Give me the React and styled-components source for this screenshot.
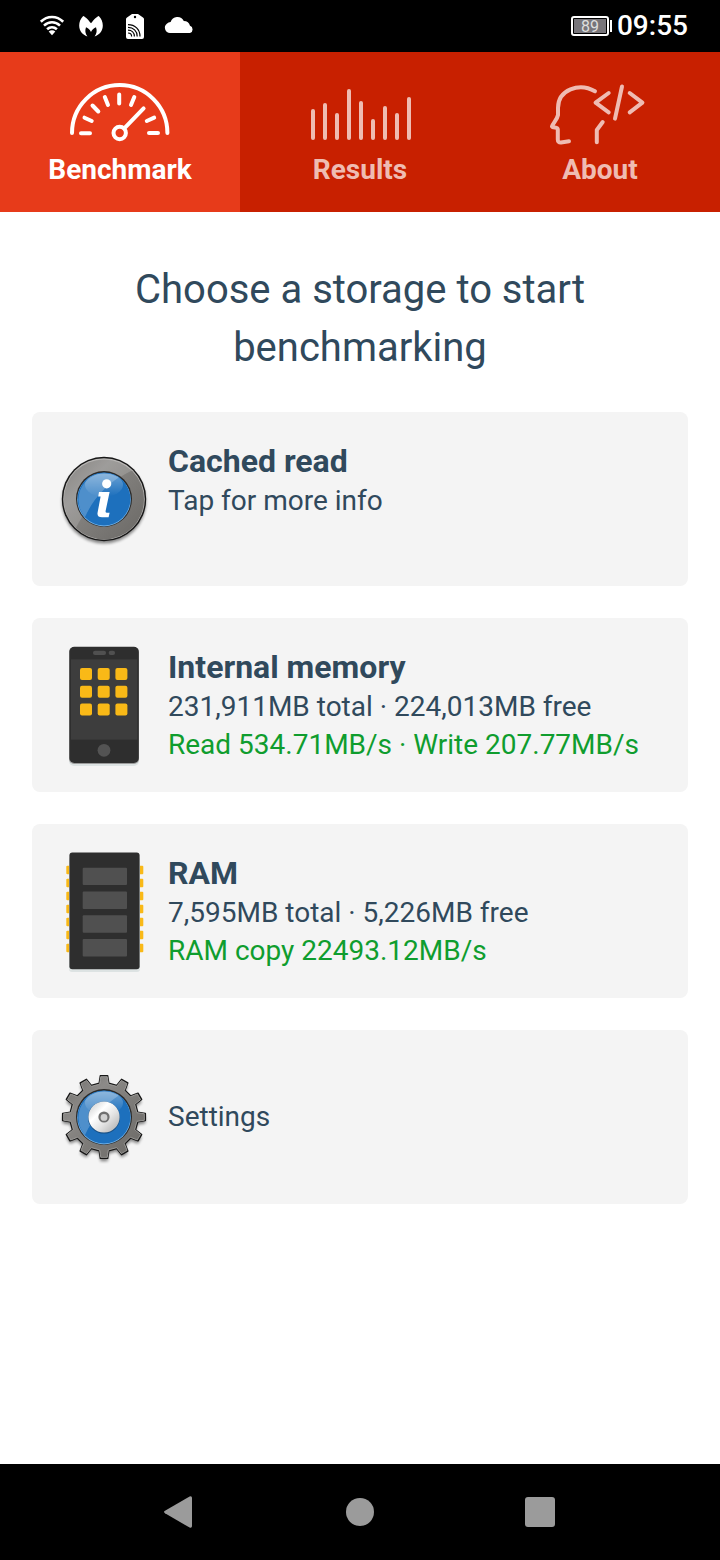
import React, { useState } from 'react';
import styled, { createGlobalStyle } from 'styled-components';

const GlobalStyle = createGlobalStyle`
* {
  box-sizing: border-box;
}
body {
  margin: 0;
  background-color: #fff;
  font-family: Roboto, "Liberation Sans", sans-serif;
  color: #30495c;
}
button {
  margin: 0;
  border: none;
  font: inherit;
  color: inherit;
  cursor: pointer;
}
svg {
  display: block;
  flex: none;
  overflow: visible;
}
`;

const Screen = styled.div`
min-height: 100vh;
display: flex;
flex-direction: column;
`;

const StatusBar = styled.header`
height: 52px;
padding: 0 32px 0 38px;
display: flex;
align-items: center;
justify-content: space-between;
background-color: #000;
color: #fff;
`;

const StatusIcons = styled.div`
display: flex;
gap: 14px;
`;

const StatusInfo = styled.div`
display: flex;
align-items: center;
`;

const Battery = styled.div`
width: 38px;
height: 20px;
padding: 1px;
border: 2px solid #fff;
border-radius: 3px;
`;

const BatteryLevel = styled.div`
height: 14px;
background-color: #77757a;
color: #dedede;
font-size: 16px;
line-height: 15px;
text-align: center;
`;

const BatteryTip = styled.div`
width: 2px;
height: 12px;
margin: 0 5px 0 1px;
background-color: #fff;
`;

const Clock = styled.time`
font-size: 28px;
font-weight: 500;
line-height: 32px;
`;

const Tabs = styled.nav`
display: grid;
grid-template-columns: repeat(3, 1fr);
background-color: #c82000;
`;

const Tab = styled.button`
height: 160px;
padding: 27px 0 0;
display: flex;
flex-direction: column;
align-items: center;
background-color: ${({ $active }) => ($active ? '#e73b1a' : '#c82000')};
color: ${({ $active }) => ($active ? '#fff' : '#efbcb2')};
`;

const TabLabel = styled.span`
font-size: 28px;
font-weight: 700;
line-height: 38px;
`;

const Main = styled.main`
flex: 1;
padding: 49px 32px 32px;
`;

const Heading = styled.h1`
margin: 0 0 35px;
font-size: 40px;
font-weight: 400;
line-height: 58px;
text-align: center;
`;

const CardList = styled.div`
display: flex;
flex-direction: column;
gap: 32px;
`;

const Card = styled.button`
width: 100%;
padding: 23px 24px;
display: flex;
align-items: center;
gap: 16px;
border-radius: 8px;
background-color: #f4f4f4;
text-align: left;
`;

const CardText = styled.span`
min-height: 118px;
display: flex;
flex-direction: column;
justify-content: ${({ $centered }) => ($centered ? 'center' : 'flex-start')};
`;

const CardTitle = styled.span`
font-size: 32px;
font-weight: 700;
line-height: 42px;
`;

const CardLine = styled.span`
font-size: 28px;
line-height: 38px;
color: ${({ $speed }) => ($speed ? '#0f9d2e' : '#30495c')};
`;

const SystemBar = styled.footer`
height: 96px;
padding: 0 12.5%;
display: grid;
grid-template-columns: repeat(3, 1fr);
background-color: #000;
`;

const SystemButton = styled.button`
padding: 0;
display: flex;
align-items: center;
justify-content: center;
background-color: transparent;
`;

function WifiIcon() {
  return (
    <svg width="28" height="28" viewBox="0 0 28 28" fill="none" stroke="#fff" strokeWidth="2.6">
      <path d="M2.8 9.8C9.3 3.4 18.7 3.4 25.2 9.8" />
      <path d="M6 13.6C10.7 9.2 17.3 9.2 22 13.6" />
      <path d="M9.1 17.3C12 14.6 16 14.6 18.9 17.3" />
      <path d="M10.7 19.6C12.6 17.8 15.4 17.8 17.3 19.6L14 23.2Z" fill="#fff" stroke="none" />
    </svg>
  );
}

function WingsIcon() {
  return (
    <svg width="28" height="28" viewBox="0 0 28 28" fill="#fff">
      <path d="M3.2 4C4.8 4.3 8 7.4 11 11.3C14 7.4 17.2 4.3 18.8 4C21.6 6.8 22.8 10 22.8 13.6C22.8 19 19.4 23.2 14.6 24.4C16.8 21.8 17.2 18.4 16 15.2C14 15.8 12.2 17.6 11 20C9.8 17.6 8 15.8 6 15.2C4.8 18.4 5.2 21.8 7.4 24.4C2.6 23.2 -0.8 19 -0.8 13.6C-0.8 10 0.4 6.8 3.2 4Z" />
    </svg>
  );
}

function TagIcon() {
  return (
    <svg width="28" height="28" viewBox="0 0 28 28" fill="none">
      <path d="M5 5.5L10 2H16L21 5.5Q22 6 22 7V25Q22 27 20 27H6Q4 27 4 25V7Q4 6 5 5.5Z" fill="#fff" />
      <circle cx="13" cy="5" r="1.2" fill="#000" />
      <path d="M6 12.6C13 12.6 18 17.5 18 24.4M6 15.4C11.4 15.4 15.2 19 15.2 24.4M6 18.2C9.8 18.2 12.4 20.6 12.4 24.4M6 21C8.2 21 9.6 22.2 9.6 24.4" stroke="#000" strokeWidth="1.2" />
    </svg>
  );
}

function CloudIcon() {
  return (
    <svg width="30" height="28" viewBox="0 0 30 28" fill="#fff">
      <path d="M6 21A5.2 5.2 0 0 1 2.8 11.8Q4.4 10 6.6 10A7.2 7.2 0 0 1 19.8 8.9A6.4 6.4 0 0 1 26 13.8A3.8 3.8 0 0 1 26 21Z" />
    </svg>
  );
}

function TabIcon({ children }) {
  return (
    <svg width="104" height="72" viewBox="0 0 104 72" fill="none" stroke="currentColor" strokeWidth="4" strokeLinecap="round" strokeLinejoin="round">
      {children}
    </svg>
  );
}

function GaugeIcon() {
  return (
    <TabIcon>
      <path d="M4 54A47.7 48 0 0 1 99.4 54" />
      <path d="M13 54.3H22M81 54H90M16.5 38.7L23.7 42M24.5 26.5L30.3 32.5M36.8 18L40 26M51.2 15.5V24.5M66.3 18L63 26M78.8 42L86.2 38.7" />
      <path d="M75.6 29.4L57 48.6" />
      <circle cx="51.7" cy="54" r="6.2" />
    </TabIcon>
  );
}

const barTops = [32, 26, 36, 12, 24, 42, 29, 36, 20];

function BarsIcon() {
  return (
    <TabIcon>
      {barTops.map((top, i) => (
        <path key={i} d={`M${5 + i * 12} ${top}V59`} />
      ))}
    </TabIcon>
  );
}

function HeadCodeIcon() {
  return (
    <TabIcon>
      <path d="M47 12.3C31 3 10 11 10 29V36C9 41 5.5 43.5 4 47.5C5 49.4 9.8 47.6 9.8 50.5V60.5Q9.8 63.7 13 63.5L21 62.3" />
      <path d="M54.7 43L48.8 51V63.3" />
      <path d="M60.7 14L47.6 23.7L60.7 33.3M74 7.5L67 39.6M81.7 14L94.4 23.7L81.7 33.3" />
    </TabIcon>
  );
}

function CardIcon({ children }) {
  return (
    <svg width="96" height="128" viewBox="0 0 96 128" aria-hidden="true">
      <defs>
        <linearGradient id="steel" x1="0" y1="0" x2="1" y2="1">
          <stop offset="0" stopColor="#6f6d6a" />
          <stop offset="0.3" stopColor="#8c8a88" />
          <stop offset="0.5" stopColor="#807e7b" />
          <stop offset="1" stopColor="#6a6865" />
        </linearGradient>
        <linearGradient id="gloss" x1="0" y1="0" x2="0" y2="1">
          <stop offset="0" stopColor="#fff" stopOpacity="0.35" />
          <stop offset="1" stopColor="#fff" stopOpacity="0" />
        </linearGradient>
        <linearGradient id="hub" x1="0" y1="0" x2="1" y2="1">
          <stop offset="0" stopColor="#c4c4c4" />
          <stop offset="0.35" stopColor="#fff" />
          <stop offset="0.6" stopColor="#e4e4e4" />
          <stop offset="1" stopColor="#a8a8a8" />
        </linearGradient>
        <filter id="soft" x="-20%" y="-20%" width="140%" height="140%">
          <feGaussianBlur stdDeviation="1.5" />
        </filter>
      </defs>
      {children}
    </svg>
  );
}

function BlueLens() {
  return (
    <>
      <circle cx="48" cy="64" r="28" fill="#2a2928" />
      <circle cx="48" cy="64.6" r="26.8" fill="#78b8ee" />
      <circle cx="48" cy="64" r="26.4" fill="#1d70bd" />
      <path d="M29 82A26.4 26.4 0 0 1 63 42.3C50 51 37 64 29 82Z" fill="#fff" opacity="0.22" />
      <ellipse cx="48" cy="50" rx="19" ry="11.5" fill="url(#gloss)" />
    </>
  );
}

function InfoIcon() {
  return (
    <CardIcon>
      <circle cx="48" cy="66.5" r="42" fill="#000" opacity="0.45" filter="url(#soft)" />
      <circle cx="48" cy="64" r="42.2" fill="#171717" />
      <circle cx="48" cy="64" r="40.8" fill="#b7b5b3" />
      <circle cx="48" cy="64.4" r="40" fill="url(#steel)" />
      <path d="M20 92.8A40 40 0 0 1 76 35.6C56 45 34 65 20 92.8Z" fill="#fff" opacity="0.16" />
      <BlueLens />
      <circle cx="50.7" cy="48.8" r="4.6" fill="#fff" />
      <path d="M43 57H53.6L49.6 76Q49.3 77.8 51 77.8H53.6L52.6 82.3H46Q40.7 82.3 41.6 77.5L44.6 61.6H42.2Z" fill="#fff" />
    </CardIcon>
  );
}

const steps = [0, 1, 2];

function PhoneIcon() {
  return (
    <CardIcon>
      <rect x="13" y="8" width="70" height="117" rx="5" fill="#dde3e3" />
      <rect x="13" y="6" width="70" height="117" rx="5" fill="#9b9b9b" />
      <rect x="13.4" y="5.7" width="69.4" height="116.3" rx="5" fill="#2e2e2e" />
      <rect x="15" y="18.3" width="66.3" height="80.4" fill="#3d3d3d" />
      <rect x="37" y="9.8" width="13" height="4.2" rx="2" fill="#505050" />
      <rect x="52.7" y="9.8" width="6.3" height="4.2" rx="2" fill="#505050" />
      {steps.map(row => steps.map(col => (
        <rect key={`${row}-${col}`} x={24 + col * 17.7} y={27 + row * 17.7} width="12" height="12" rx="2" fill="#f9b917" />
      )))}
      <circle cx="48" cy="109.3" r="6.4" fill="#535353" />
    </CardIcon>
  );
}

function RamIcon() {
  return (
    <CardIcon>
      {[0, 1, 2, 3, 4, 5, 6].map(i => (
        <rect key={i} x="10.3" y={18.7 + i * 13} width="77" height="8.6" rx="1" fill="#f9b917" />
      ))}
      <rect x="13" y="10" width="71" height="115" rx="3" fill="#dde3e3" />
      <rect x="13.4" y="5.4" width="70.2" height="116.8" rx="3" fill="#2e2e2e" />
      {[0, 1, 2, 3].map(i => (
        <rect key={i} x="26.7" y={20.7 + i * 23.8} width="44.3" height="17.4" rx="1" fill="#505050" />
      ))}
    </CardIcon>
  );
}

// outline of a 12 tooth cog around (48, 64)
function cogPath(outer, root, half) {
  const at = (radius, degrees) => {
    const a = (degrees * Math.PI) / 180;
    return `${(48 + radius * Math.cos(a)).toFixed(2)} ${(64 + radius * Math.sin(a)).toFixed(2)}`;
  };
  const points = [];
  for (let i = 0; i < 12; i += 1) {
    const mid = i * 30;
    points.push(at(root, mid - half - 2), at(outer, mid - half + 1), at(outer, mid + half - 1), at(root, mid + half + 2));
  }
  return `M${points.join('L')}Z`;
}

function CogIcon() {
  return (
    <CardIcon>
      <path d={cogPath(41.5, 34, 6)} transform="translate(0 3)" fill="#000" opacity="0.45" filter="url(#soft)" />
      <path d={cogPath(41.5, 34, 6)} fill="#171717" stroke="#171717" strokeWidth="1.5" strokeLinejoin="round" />
      <path d={cogPath(40.5, 33.2, 5.6)} fill="url(#steel)" stroke="#aaa8a6" strokeWidth="0.8" />
      <BlueLens />
      <circle cx="48" cy="64.6" r="16" fill="#174f84" />
      <circle cx="48" cy="64" r="15.6" fill="url(#hub)" />
      <circle cx="48" cy="64" r="5.6" fill="#6f6f6f" />
      <circle cx="48" cy="64.4" r="3.4" fill="#d0d0d0" />
    </CardIcon>
  );
}

const tabs = [
  { name: 'Benchmark', Icon: GaugeIcon },
  { name: 'Results', Icon: BarsIcon },
  { name: 'About', Icon: HeadCodeIcon },
];

const storages = [
  { title: 'Cached read', details: 'Tap for more info', Icon: InfoIcon },
  {
    title: 'Internal memory',
    details: '231,911MB total · 224,013MB free',
    speed: 'Read 534.71MB/s · Write 207.77MB/s',
    Icon: PhoneIcon,
  },
  {
    title: 'RAM',
    details: '7,595MB total · 5,226MB free',
    speed: 'RAM copy 22493.12MB/s',
    Icon: RamIcon,
  },
];

function App() {
  const [activeTab, setActiveTab] = useState('Benchmark');

  return (
    <Screen>
      <GlobalStyle />
      <StatusBar>
        <StatusIcons>
          <WifiIcon />
          <WingsIcon />
          <TagIcon />
          <CloudIcon />
        </StatusIcons>
        <StatusInfo>
          <Battery>
            <BatteryLevel>89</BatteryLevel>
          </Battery>
          <BatteryTip />
          <Clock>09:55</Clock>
        </StatusInfo>
      </StatusBar>
      <Tabs>
        {tabs.map(({ name, Icon }) => (
          <Tab key={name} $active={name === activeTab} onClick={() => setActiveTab(name)}>
            <Icon />
            <TabLabel>{name}</TabLabel>
          </Tab>
        ))}
      </Tabs>
      <Main>
        <Heading>Choose a storage to start benchmarking</Heading>
        <CardList>
          {storages.map(({ title, details, speed, Icon }) => (
            <Card key={title}>
              <Icon />
              <CardText>
                <CardTitle>{title}</CardTitle>
                <CardLine>{details}</CardLine>
                {speed && <CardLine $speed>{speed}</CardLine>}
              </CardText>
            </Card>
          ))}
          <Card>
            <CogIcon />
            <CardText $centered>
              <CardLine>Settings</CardLine>
            </CardText>
          </Card>
        </CardList>
      </Main>
      <SystemBar>
        <SystemButton aria-label="Back">
          <svg width="32" height="32" viewBox="0 0 32 32" fill="#9b9b9b">
            <path d="M1 14.8L25.6 0.4Q28 -0.4 28 2V30Q28 32.4 25.6 31.6L1 17.2Q-1 16 1 14.8Z" />
          </svg>
        </SystemButton>
        <SystemButton aria-label="Home">
          <svg width="32" height="32" viewBox="0 0 32 32" fill="#9b9b9b">
            <circle cx="16" cy="16" r="14" />
          </svg>
        </SystemButton>
        <SystemButton aria-label="Recent apps">
          <svg width="32" height="32" viewBox="0 0 32 32" fill="#9b9b9b">
            <rect x="1" y="1" width="30" height="30" rx="3" />
          </svg>
        </SystemButton>
      </SystemBar>
    </Screen>
  );
}

export default App;
